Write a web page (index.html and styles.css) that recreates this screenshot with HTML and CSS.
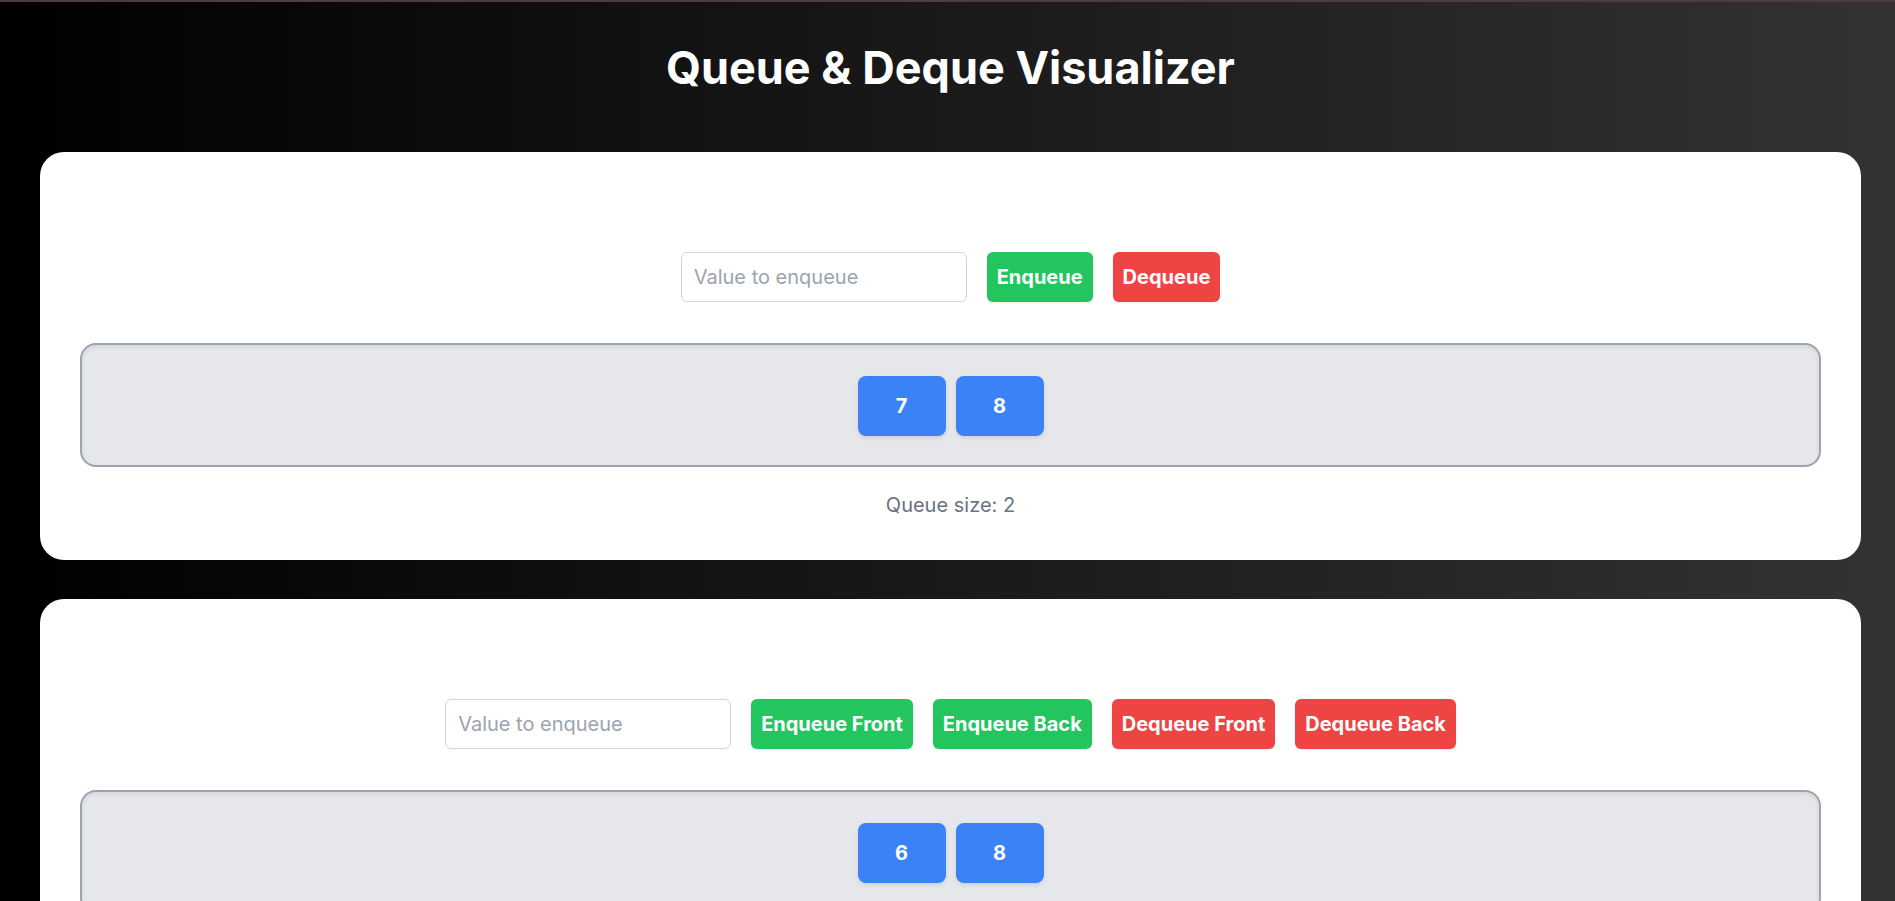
FILE: index.html
```html
<!DOCTYPE html>
<html lang="en">
<head>
<meta charset="utf-8">
<title>Queue &amp; Deque Visualizer</title>
<link rel="stylesheet" href="styles.css">
</head>
<body>
<div class="page">
  <h1 class="title">Queue &amp; Deque Visualizer</h1>

  <section class="card">
    <div class="controls">
      <input class="value-input" type="text" placeholder="Value to enqueue">
      <button class="btn btn-green">Enqueue</button>
      <button class="btn btn-red">Dequeue</button>
    </div>
    <div class="track">
      <div class="item">7</div>
      <div class="item">8</div>
    </div>
    <p class="size">Queue size: 2</p>
  </section>

  <section class="card">
    <div class="controls">
      <input class="value-input" type="text" placeholder="Value to enqueue">
      <button class="btn btn-green">Enqueue Front</button>
      <button class="btn btn-green">Enqueue Back</button>
      <button class="btn btn-red">Dequeue Front</button>
      <button class="btn btn-red">Dequeue Back</button>
    </div>
    <div class="track">
      <div class="item">6</div>
      <div class="item">8</div>
    </div>
    <p class="size">Deque size: 2</p>
  </section>
</div>
</body>
</html>
```

FILE: styles.css
```css
* { box-sizing: border-box; }

html, body {
  margin: 0;
  padding: 0;
}

body {
  font-family: Inter, "Noto Sans", sans-serif;
  background: linear-gradient(to right, #000000, #333333);
  border-top: 2px solid #4b3f3a;
  min-height: 100vh;
  overflow: hidden;
}

.page {
  padding: 39px 34px 40px 40px;
}

.title {
  margin: 0 0 58px;
  text-align: center;
  color: #ffffff;
  font-size: 45px;
  line-height: 53px;
  font-weight: 700;
}

.card {
  background: #ffffff;
  border-radius: 24px;
  padding: 100px 40px 41px;
  margin-bottom: 39px;
}

.controls {
  display: flex;
  justify-content: center;
  align-items: center;
  gap: 20px;
}

.value-input {
  width: 286px;
  height: 50px;
  border: 1px solid #d1d5db;
  border-radius: 6px;
  padding: 0 12px;
  font-family: Inter, sans-serif;
  font-size: 20px;
  color: #111827;
  background: #fff;
  outline: none;
}

.value-input::placeholder {
  color: #9ca3af;
}

.btn {
  height: 50px;
  padding: 0 10px;
  border: none;
  border-radius: 6px;
  font-family: Inter, sans-serif;
  font-size: 20px;
  font-weight: 700;
  color: #ffffff;
  box-shadow: 0 1px 2px rgba(0,0,0,0.08);
}

.btn-green { background: #22c55e; }
.btn-red { background: #ef4444; }

.track {
  margin-top: 41px;
  display: flex;
  justify-content: center;
  gap: 10px;
  padding: 31px 30px 29px;
  background: #e5e7eb;
  border: 2px solid #9ca3af;
  border-radius: 16px;
  box-shadow: inset 0 2px 4px rgba(0,0,0,0.08);
}

.item {
  width: 88px;
  height: 60px;
  display: flex;
  align-items: center;
  justify-content: center;
  background: #3b82f6;
  color: #ffffff;
  font-size: 20px;
  font-weight: 700;
  border-radius: 8px;
  box-shadow: 0 2px 4px rgba(0,0,0,0.1);
}

.size {
  margin: 24px 0 0;
  text-align: center;
  font-size: 20px;
  line-height: 28px;
  color: #6b7280;
}
```
